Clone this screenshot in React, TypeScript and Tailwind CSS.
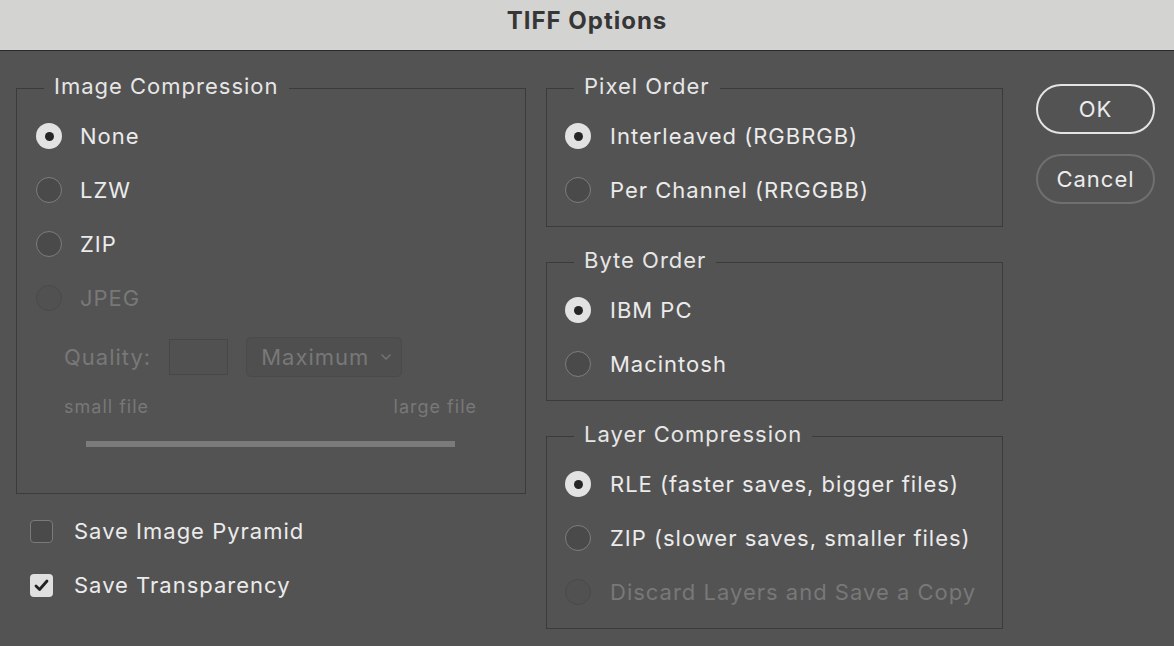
import React from "react";

type RState = "on" | "off" | "disabled";

function Radio({ state }: { state: RState }) {
  if (state === "on") {
    return (
      <div className="w-[26px] h-[26px] rounded-full bg-[#e2e2e2] flex items-center justify-center shrink-0">
        <div className="w-[9px] h-[9px] rounded-full bg-[#262626]" />
      </div>
    );
  }
  if (state === "disabled") {
    return <div className="w-[26px] h-[26px] rounded-full border-[1.5px] border-[#4a4a4a] bg-[#515151] shrink-0" />;
  }
  return <div className="w-[26px] h-[26px] rounded-full border-[1.5px] border-[#7d7d7d] bg-[#4a4a4a] shrink-0" />;
}

function RadioRow({ state, label, gap }: { state: RState; label: string; gap: string }) {
  return (
    <div className={`h-[54px] flex items-center ${gap}`}>
      <Radio state={state} />
      <span
        className={`text-[22px] tracking-[1px] leading-none ${
          state === "disabled" ? "text-[#787878]" : "text-[#ebebeb]"
        }`}
      >
        {label}
      </span>
    </div>
  );
}

function Legend({ title, ml }: { title: string; ml: string }) {
  return (
    <legend className={`${ml} px-[10px] pb-[4px] text-[22px] tracking-[1px] leading-[24px] text-[#e6e6e6]`}>
      {title}
    </legend>
  );
}

function Checkbox({ checked, label }: { checked: boolean; label: string }) {
  return (
    <div className="h-[54px] flex items-center gap-[21px] pl-[14px]">
      {checked ? (
        <div className="w-[23px] h-[23px] rounded-[4px] bg-[#e0e0e0] flex items-center justify-center shrink-0">
          <svg width="15" height="13" viewBox="0 0 15 13">
            <path
              d="M2 7 L5.6 10.5 L13 2"
              fill="none"
              stroke="#222"
              strokeWidth="2.8"
              strokeLinecap="round"
              strokeLinejoin="round"
            />
          </svg>
        </div>
      ) : (
        <div className="w-[23px] h-[23px] rounded-[4px] border-[1.5px] border-[#7a7a7a] bg-[#4a4a4a] shrink-0" />
      )}
      <span className="text-[22px] tracking-[1px] leading-none text-[#ebebeb]">{label}</span>
    </div>
  );
}

export default function App() {
  return (
    <div
      className="w-[1174px] h-[646px] bg-[#535353] flex flex-col overflow-hidden"
      style={{ fontFamily: "Inter, 'Noto Sans', sans-serif" }}
    >
      <div className="h-[51px] shrink-0 bg-[#d3d3d1] border-b border-[#2a2a2a] flex items-center justify-center">
        <span className="text-[24px] font-bold text-[#363636] tracking-[1px] -mt-[8px]">TIFF Options</span>
      </div>

      <div className="flex pl-[16px] pt-[23px]">
        {/* Left column */}
        <div className="w-[510px] flex flex-col">
          <fieldset className="border border-[#3b3b3b] pl-[19px] h-[420px]">
            <Legend title="Image Compression" ml="ml-[8px]" />
            <div className="pt-[7px]">
              <RadioRow state="on" label="None" gap="gap-[18px]" />
              <RadioRow state="off" label="LZW" gap="gap-[18px]" />
              <RadioRow state="off" label="ZIP" gap="gap-[18px]" />
              <RadioRow state="disabled" label="JPEG" gap="gap-[18px]" />
              <div className="ml-[28px] mt-[12px] w-[413px]">
                <div className="h-[40px] flex items-center">
                  <span className="text-[22px] tracking-[1px] leading-none text-[#787878]">Quality:</span>
                  <div className="ml-[18px] w-[59px] h-[36px] border border-[#474747] bg-[#515151]" />
                  <div className="ml-[18px] w-[156px] h-[40px] rounded-[5px] border border-[#4a4a4a] bg-[#4f4f4f] flex items-center pl-[14px] pr-[9px]">
                    <span className="text-[22px] tracking-[1px] leading-none text-[#787878] flex-1">Maximum</span>
                    <svg width="12" height="8" viewBox="0 0 12 8">
                      <path d="M1.5 1.5 L6 6 L10.5 1.5" fill="none" stroke="#747474" strokeWidth="1.4" />
                    </svg>
                  </div>
                </div>
                <div className="mt-[21px] flex justify-between text-[18px] tracking-[1px] leading-none text-[#787878]">
                  <span>small file</span>
                  <span>large file</span>
                </div>
                <div className="mx-[22px] mt-[25px] h-[6px] bg-[#7b7b7b]" />
              </div>
            </div>
          </fieldset>
          <div className="mt-[10px]">
            <Checkbox checked={false} label="Save Image Pyramid" />
            <Checkbox checked={true} label="Save Transparency" />
          </div>
        </div>

        {/* Right column */}
        <div className="ml-[20px] w-[457px] flex flex-col gap-[21px]">
          <fieldset className="border border-[#3b3b3b] pl-[18px] pb-[9px]">
            <Legend title="Pixel Order" ml="ml-[9px]" />
            <div className="pt-[7px]">
              <RadioRow state="on" label="Interleaved (RGBRGB)" gap="gap-[19px]" />
              <RadioRow state="off" label="Per Channel (RRGGBB)" gap="gap-[19px]" />
            </div>
          </fieldset>
          <fieldset className="border border-[#3b3b3b] pl-[18px] pb-[9px]">
            <Legend title="Byte Order" ml="ml-[9px]" />
            <div className="pt-[7px]">
              <RadioRow state="on" label="IBM PC" gap="gap-[19px]" />
              <RadioRow state="off" label="Macintosh" gap="gap-[19px]" />
            </div>
          </fieldset>
          <fieldset className="border border-[#3b3b3b] pl-[18px] pb-[9px]">
            <Legend title="Layer Compression" ml="ml-[9px]" />
            <div className="pt-[7px]">
              <RadioRow state="on" label="RLE (faster saves, bigger files)" gap="gap-[19px]" />
              <RadioRow state="off" label="ZIP (slower saves, smaller files)" gap="gap-[19px]" />
              <RadioRow state="disabled" label="Discard Layers and Save a Copy" gap="gap-[19px]" />
            </div>
          </fieldset>
        </div>

        {/* Buttons */}
        <div className="ml-[33px] pt-[10px] flex flex-col gap-[20px]">
          <button className="w-[119px] h-[50px] rounded-full border-2 border-[#e4e4e4] text-[22px] tracking-[1px] text-[#ececec] leading-none">
            OK
          </button>
          <button className="w-[119px] h-[50px] rounded-full border-2 border-[#707070] text-[22px] tracking-[1px] text-[#ececec] leading-none">
            Cancel
          </button>
        </div>
      </div>
    </div>
  );
}
